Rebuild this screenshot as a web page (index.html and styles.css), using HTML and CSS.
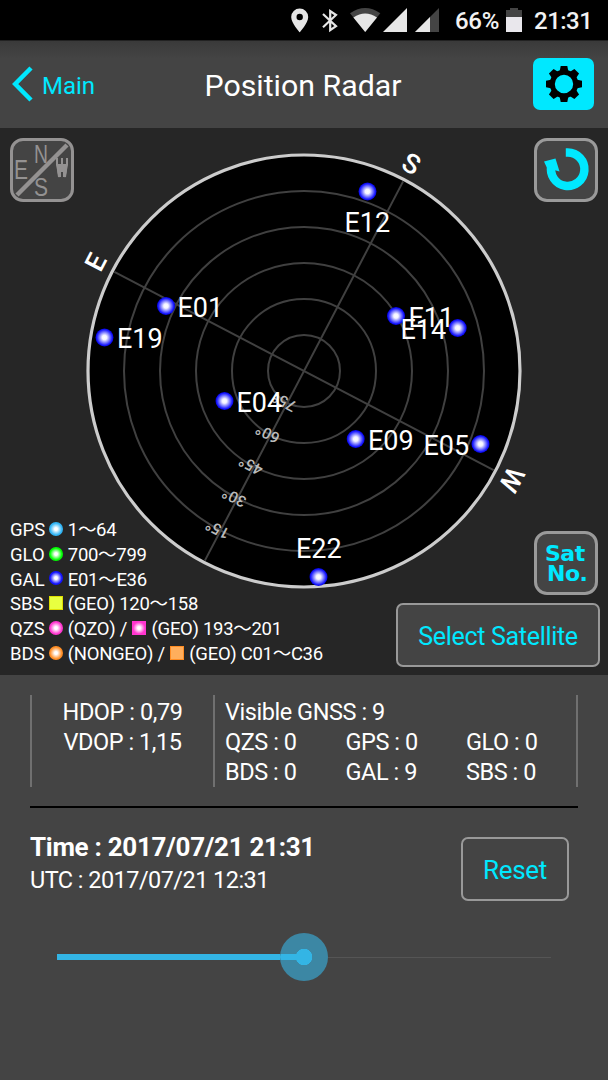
FILE: index.html
```html
<!DOCTYPE html>
<html lang="en">
	<head>
		<meta charset="UTF-8">
		<meta name="viewport" content="width=device-width, initial-scale=1.0">
		<title>Position Radar</title>
		<link rel="stylesheet" href="styles.css">
	</head>
	<body>
		<!-- status bar -->
		<div class="status">
			<svg class="icons" width="150" height="26" viewBox="290 7 150 26">
				<path fill="#e6e6e6" fill-rule="evenodd" d="M299.700 8.500a8.500 8.500 0 0 1 8.500 8.500c0 6-8.500 15.300-8.500 15.300s-8.500-9.300-8.500-15.300a8.500 8.500 0 0 1 8.500-8.500zm0 5.300a3.200 3.200 0 1 0 0 6.400 3.200 3.200 0 0 0 0-6.400z"/>
				<path fill="none" stroke="#e6e6e6" stroke-width="2.200" d="M323 14l13 12.200-5.800 4V11l5.800 4-13 12.200"/>
				<path fill="#444" d="M365.200 32L350 13.300Q365.200 2.700 380.300 13.300z"/>
				<path fill="#e6e6e6" d="M365.200 32L353.400 17.400Q365.200 9.500 377 17.400z"/>
				<path fill="#e6e6e6" d="M383 32L407 8v24z"/>
				<path fill="#444" d="M415 32L439 8v24z"/>
				<path fill="#e6e6e6" d="M415 32L430 17v15z"/>
			</svg>
			<span class="percent">66%</span>
			<svg class="battery" width="16" height="26" viewBox="0 0 16 26">
				<path fill="#444" d="M0 3h4V1h8v2h4v22H0z"/>
				<path fill="#e9e7ec" d="M0 10h16v15H0z"/>
			</svg>
			<span class="clock">21:31</span>
		</div>

		<!-- title bar -->
		<div class="header">
			<a class="back">
				<svg width="21" height="36" viewBox="0 0 21 36"><path fill="none" stroke="#00e8ff" stroke-width="4.500" d="M19 2L3.200 18 19 34"/></svg>
				<span>Main</span>
			</a>
			<h1>Position Radar</h1>
			<div class="gear">
				<svg width="38" height="38" viewBox="-19 -19 38 38">
					<circle r="11.700" fill="none" stroke="#000" stroke-width="5"/>
					<g id="teeth">
						<path id="tooth" d="M-4.500-12L-3.300-18h6.600L4.500-12z"/>
						<use href="#tooth" transform="rotate(45)"/>
						<use href="#tooth" transform="rotate(90)"/>
						<use href="#tooth" transform="rotate(135)"/>
					</g>
					<use href="#teeth" transform="rotate(180)"/>
				</svg>
			</div>
		</div>

		<!-- radar -->
		<div class="radar">
			<svg class="sky" width="608" height="547" viewBox="0 128 608 547">
				<defs>
					<radialGradient id="sat">
						<stop offset="0" stop-color="#fff"/>
						<stop offset=".25" stop-color="#f4f4ff"/>
						<stop offset=".85" stop-color="#1c1cff"/>
						<stop offset="1" stop-color="#0000e0"/>
					</radialGradient>
				</defs>
				<circle class="edge" cx="304" cy="371" r="216"/>
				<g class="rings">
					<circle cx="304" cy="371" r="180"/>
					<circle cx="304" cy="371" r="144"/>
					<circle cx="304" cy="371" r="108"/>
					<circle cx="304" cy="371" r="72"/>
					<circle cx="304" cy="371" r="36"/>
					<path transform="rotate(27.600 304 371)" d="M304 157v428M90 371h428"/>
				</g>
				<g class="angle" transform="rotate(207.600 304 371)">
					<text x="295" y="340">75<tspan dy="3">°</tspan></text>
					<text x="295" y="304">60<tspan dy="3">°</tspan></text>
					<text x="295" y="268">45<tspan dy="3">°</tspan></text>
					<text x="295" y="232">30<tspan dy="3">°</tspan></text>
					<text x="295" y="196">15<tspan dy="3">°</tspan></text>
				</g>
				<g class="direction">
					<text x="303" y="147" transform="rotate(27.600 304 371)">S</text>
					<text x="304" y="146" transform="rotate(117.600 304 371)">W</text>
					<text x="304" y="145.500" transform="rotate(-62.400 304 371)">E</text>
				</g>
				<g fill="url(#sat)">
					<circle cx="367.500" cy="191.500" r="9"/>
					<circle cx="166" cy="306" r="9"/>
					<circle cx="104.500" cy="337.500" r="9"/>
					<circle cx="396" cy="316" r="9"/>
					<circle cx="457.700" cy="328" r="9"/>
					<circle cx="224.500" cy="401" r="9"/>
					<circle cx="355.700" cy="439" r="9"/>
					<circle cx="480.500" cy="444" r="9"/>
					<circle cx="318.500" cy="577" r="9"/>
				</g>
				<g class="name">
					<text x="344.500" y="232">E12</text>
					<text x="177.500" y="316.500">E01</text>
					<text x="117" y="348">E19</text>
					<text x="408.500" y="326.500">E11</text>
					<text x="400.500" y="338.500">E14</text>
					<text x="236.500" y="411.500">E04</text>
					<text x="368" y="449.500">E09</text>
					<text x="423.500" y="454.500">E05</text>
					<text x="296" y="557.500">E22</text>
				</g>
			</svg>

			<div class="tool compass">
				<svg width="58" height="58" viewBox="0 0 58 58">
					<path stroke="#949292" stroke-width="4.500" d="M4 54L54 4"/>
					<g fill="#949292">
						<text x="21" y="21.500" font-size="26" textLength="14" lengthAdjust="spacingAndGlyphs">N</text>
						<text x="1" y="37.500" font-size="27" textLength="14" lengthAdjust="spacingAndGlyphs">E</text>
						<text x="21" y="55" font-size="26" textLength="14" lengthAdjust="spacingAndGlyphs">S</text>
					</g>
					<path fill="none" stroke="#949292" stroke-width="2" d="M44 17v7l2.500 12v-12M54 17v7l-2.500 12v-12M49 17v8"/>
					<path fill="#949292" d="M44 23h10v6l-1 7h-3v-5h-2v5h-3l-1-7z"/>
				</svg>
			</div>
			<div class="tool reload">
				<svg width="58" height="58" viewBox="0 0 58 58">
					<path fill="none" stroke="#00e8ff" stroke-width="8.500" d="M28.800 11.600h1.900a16.700 16.700 0 1 1-16.200 12.700"/>
					<path fill="#00e8ff" d="M7 20.500L18.500 17.500 22.500 30.500 10 27z"/>
				</svg>
			</div>
			<div class="tool number"><span>Sat</span><span>No.</span></div>
			<div class="button select">Select Satellite</div>

			<ul class="legend">
				<li><b>GPS</b><i class="gps"></i> 1〜64</li>
				<li><b>GLO</b><i class="glo"></i> 700〜799</li>
				<li><b>GAL</b><i class="gal"></i> E01〜E36</li>
				<li><b>SBS</b><i class="sbs"></i> (GEO) 120〜158</li>
				<li><b>QZS</b><i class="qzs"></i> (QZO) / <i class="qzs geo"></i> (GEO) 193〜201</li>
				<li><b>BDS</b><i class="bds"></i> (NONGEO) / <i class="bds geo"></i> (GEO) C01〜C36</li>
			</ul>
		</div>

		<!-- values -->
		<div class="info">
			<div class="dop">
				<p>HDOP : 0,79</p>
				<p>VDOP : 1,15</p>
			</div>
			<div class="gnss">
				<p class="total">Visible GNSS : 9</p>
				<p>QZS : 0</p>
				<p>GPS : 0</p>
				<p>GLO : 0</p>
				<p>BDS : 0</p>
				<p>GAL : 9</p>
				<p>SBS : 0</p>
			</div>
		</div>

		<div class="time">
			<div>
				<p class="local">Time : 2017/07/21 21:31</p>
				<p class="utc">UTC : 2017/07/21 12:31</p>
			</div>
			<div class="button reset">Reset</div>
		</div>

		<div class="slider">
			<div class="fill"></div>
			<div class="thumb"></div>
			<div class="rest"></div>
		</div>
	</body>
</html>
```
FILE: styles.css
```css
* {
	margin: 0;
	padding: 0;
	box-sizing: border-box;
}

body {
	width: 608px;
	height: 1080px;
	overflow: hidden;
	background: #444;
	color: #fff;
	font-family: Roboto, "Noto Sans CJK JP", sans-serif;
}

svg {
	display: block;
	flex: none;
	overflow: visible;
}

/* status bar */
.status {
	height: 40px;
	background: #000;
	display: flex;
	align-items: center;
	padding-left: 290px;
	font-size: 24px;
	font-weight: 500;
	color: #f2f2f2;
	white-space: nowrap;
}

.percent {
	width: 41px;
	margin-left: 15px;
	margin-top: 2px;
	letter-spacing: -.3px;
}

.battery {
	margin-left: 10px;
}

.clock {
	margin-left: 12px;
	margin-top: 2px;
	letter-spacing: -.5px;
}

/* title bar */
.header {
	height: 88px;
	display: grid;
	grid-template-columns: 1fr auto 1fr;
	align-items: center;
	padding: 0 14px 2px 12px;
	background: linear-gradient(#3a3a3a, #444 20%);
	border-top: 1px solid #222;
}

.back {
	display: flex;
	align-items: center;
	gap: 9px;
	color: #00e8ff;
	font-size: 24px;
}

.back span {
	margin-top: 4px;
}

h1 {
	font-size: 30.3px;
	font-weight: 400;
	margin-top: 3px;
}

.gear {
	justify-self: end;
	width: 61px;
	height: 52px;
	border-radius: 7px;
	background: #00e8ff;
	display: grid;
	place-items: center;
}

/* radar: the buttons and the legend share one cell with the sky */
.radar {
	display: grid;
	height: 547px;
	background: #262626;
}

.radar > * {
	grid-area: 1 / 1;
}

.edge {
	fill: #000;
	stroke: #ccc;
	stroke-width: 3.2;
}

.rings {
	fill: none;
	stroke: #404040;
	stroke-width: 2;
}

.angle {
	fill: #bbb;
	font-size: 15.5px;
	font-weight: 500;
}

.angle tspan {
	font-size: 20px;
	font-weight: 400;
}

.direction {
	fill: #fff;
	font-size: 27px;
	font-weight: 500;
	text-anchor: middle;
}

.name {
	fill: #fff;
	font-size: 27px;
}

.tool {
	width: 64px;
	height: 64px;
	border: 3px solid #9a9a9a;
	border-radius: 13px;
	background: #444;
	justify-self: end;
	margin: 10px 10px 0 0;
}

.compass {
	justify-self: start;
	margin-left: 10px;
	border-color: #949292;
	font-family: "Liberation Sans", sans-serif;
}

.number {
	align-self: end;
	margin-bottom: 80px;
	padding: 10px 0 0 8px;
	color: #00e8ff;
	font: bold 22px/20px "DejaVu Sans", sans-serif;
	letter-spacing: -.5px;
}

.number span {
	display: block;
}

.number span + span {
	padding-left: 2px;
}

.button {
	display: grid;
	place-items: center;
	border: 2px solid #999;
	border-radius: 7px;
	background: #444;
	color: #00e8ff;
	height: 64px;
	letter-spacing: -.3px;
}

.select {
	align-self: end;
	justify-self: end;
	width: 204px;
	margin: 0 8px 8px 0;
	padding-top: 2px;
	font-size: 25px;
}

.legend {
	align-self: end;
	justify-self: start;
	list-style: none;
	padding: 0 0 8.5px 10px;
	font-size: 18.5px;
	letter-spacing: -.3px;
}

.legend li {
	height: 24.75px;
	line-height: 24.75px;
	display: flex;
	align-items: center;
	white-space: pre;
}

.legend b {
	width: 37.5px;
	font-weight: 400;
	letter-spacing: 0;
}

.legend i {
	width: 14px;
	height: 14px;
	margin: 0 1px 3px;
	border-radius: 50%;
	background: radial-gradient(closest-side, #fff 20%, var(--color) 85%);
}

.gps { --color: #2fb4f5; }
.glo { --color: #0f0; }
.gal { --color: #11f; }
.sbs { --color: #ef2; }
.qzs { --color: #ff35cf; }
.bds { --color: #ff8c22; }

.legend .sbs,
.legend .geo {
	border-radius: 0;
}

.legend .sbs {
	background: #e8ff40;
	border: 1px solid #dede00;
}

.legend .bds.geo {
	background: #ffae5c;
	border: 1px solid #ff8c22;
}

/* values */
.info {
	display: flex;
	height: 133px;
	margin: 0 30px;
	padding: 20px 0;
	border-bottom: 2px solid #000;
	font-size: 23.5px;
	letter-spacing: -.45px;
	line-height: 30.4px;
	white-space: nowrap;
}

.dop {
	width: 183px;
	border-left: 2px solid #707070;
	text-align: center;
}

.dop,
.gnss {
	height: 92px;
	padding-top: 1.5px;
}

.gnss {
	flex: 1;
	border: solid #707070;
	border-width: 0 2px;
	padding-left: 10px;
	display: grid;
	grid-template-columns: 120.5px 120.5px auto;
	align-content: start;
}

.total {
	grid-column: 1 / 4;
}

.time {
	display: flex;
	justify-content: space-between;
	padding: 29px 39px 0 30px;
}

.local {
	margin-top: -9px;
	font-size: 26px;
	font-weight: 700;
	letter-spacing: -.3px;
	line-height: 38px;
}

.utc {
	font-size: 23.5px;
	letter-spacing: -.55px;
	line-height: 28px;
}

.reset {
	width: 108px;
	padding-top: 2px;
	font-size: 26px;
}

.slider {
	display: flex;
	align-items: center;
	margin: 32px 57px 0;
	height: 48px;
}

.fill {
	width: 223px;
	height: 6px;
	background: #33b5e5;
}

.thumb {
	width: 48px;
	height: 48px;
	border-radius: 50%;
	background:
		radial-gradient(circle, #33b5e5 8px, transparent 8.5px),
		linear-gradient(#33b5e5, #33b5e5) 0 50% / 24px 6px no-repeat,
		#3c87a4;
}

.rest {
	flex: 1;
	height: 1px;
	background: #555;
}
```
